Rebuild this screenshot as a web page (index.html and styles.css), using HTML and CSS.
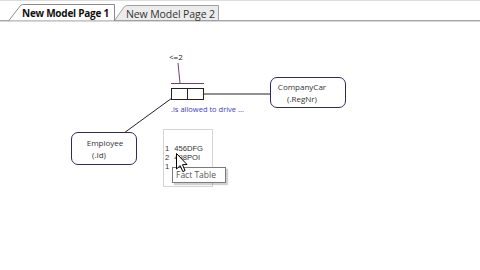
FILE: index.html
```html
<!DOCTYPE html>
<html>
<head>
<meta charset="utf-8">
<link rel="stylesheet" href="styles.css">
</head>
<body>
<div class="app">
  <div class="tabstrip">
    <div class="tab active">
      <svg class="tabbg" width="108" height="17" viewBox="0 0 108 17"><polygon points="0.5,17 12.5,1.5 14.5,0.5 106.5,0.5 106.5,17" fill="#fff" stroke="#8c8c8c"/></svg>
      <span class="tablabel">New Model Page 1</span>
    </div>
    <div class="tab">
      <svg class="tabbg" width="106" height="17" viewBox="0 0 106 17"><polygon points="0.5,16.5 10.5,2.5 12.5,1.5 104.5,1.5 104.5,16.5" fill="#ececec" stroke="#a0a0a0"/></svg>
      <span class="tablabel">New Model Page 2</span>
    </div>
  </div>
  <div class="canvas">
    <svg class="wires" width="480" height="250" viewBox="0 20 480 250">
      <line x1="124" y1="132" x2="172" y2="97" stroke="#222" stroke-width="1"/>
      <line x1="203" y1="93" x2="270" y2="93" stroke="#222" stroke-width="1"/>
      <line x1="178" y1="62" x2="180" y2="82" stroke="#7a3a7a" stroke-width="1"/>
      <line x1="171" y1="82.5" x2="204" y2="82.5" stroke="#7a3a7a" stroke-width="1"/>
      <rect x="171.5" y="87.5" width="32" height="11" fill="#fff" stroke="#222"/>
      <line x1="187.5" y1="88" x2="187.5" y2="98" stroke="#222"/>
      <rect x="163.5" y="128.5" width="49" height="57" fill="#fff" stroke="#d4d4d4"/>
    </svg>
    <div class="constraint">&lt;=2</div>
    <div class="reading">.is allowed to drive ...</div>
    <div class="entity employee"><span>Employee</span><span>(.Id)</span></div>
    <div class="entity car"><span>CompanyCar</span><span>(.RegNr)</span></div>
    <div class="facttable">
      <div class="row"><span class="n">1</span><span>456DFG</span></div>
      <div class="row"><span class="n">2</span><span>498POI</span></div>
      <div class="row"><span class="n">1</span><span></span></div>
    </div>
    <div class="tooltip">Fact Table</div>
    <svg class="cursor" width="12" height="20" viewBox="0 0 12 20"><path d="M0.5,0.5 L0.5,16 L4.2,12.6 L6.8,18.6 L9,17.6 L6.5,11.7 L11,11.5 Z" fill="#fff" stroke="#000" stroke-width="1" stroke-linejoin="miter"/></svg>
  </div>
</div>
</body>
</html>
```
FILE: styles.css
```css
html, body {
  margin: 0;
  padding: 0;
  background: #fff;
  width: 480px;
  height: 270px;
  overflow: hidden;
}
.app {
  display: flex;
  flex-direction: column;
  width: 480px;
  height: 270px;
  font-family: "Open Sans", "DejaVu Sans", sans-serif;
}
.tabstrip {
  display: flex;
  align-items: flex-end;
  padding-left: 8px;
  border-top: 1px solid #dcdcdc;
  border-bottom: 1px solid #a8a8a8;
  box-sizing: border-box;
  height: 21px;
  box-shadow: 0 1px 0 #d8d8d8;
  position: relative;
  z-index: 2;
}
.tab {
  position: relative;
  height: 17px;
  display: flex;
  align-items: center;
  margin-bottom: -1px;
}
.tab.active {
  width: 107px;
  z-index: 2;
}
.tab:not(.active) {
  width: 106px;
  margin-left: -1px;
  z-index: 1;
}
.tabbg {
  position: absolute;
  left: 0;
  top: 0;
}
.tablabel {
  position: relative;
  font-size: 10.5px;
  color: #111;
  white-space: nowrap;
  letter-spacing: -0.1px;
}
.tab.active .tablabel {
  font-size: 10px;
  letter-spacing: -0.25px;
  font-weight: 700;
  padding-left: 14px;
  padding-top: 1px;
}
.tab:not(.active) .tablabel {
  color: #333;
  padding-left: 12px;
  padding-top: 2px;
}
.canvas {
  position: relative;
  flex: 1;
}
.wires {
  position: absolute;
  left: 0;
  top: 0;
}
.constraint {
  position: absolute;
  left: 169px;
  top: 30px;
  font-size: 8px;
  color: #222;
}
.reading {
  position: absolute;
  left: 171px;
  top: 83px;
  font-size: 7.5px;
  color: #3a3ad0;
  white-space: nowrap;
}
.entity {
  position: absolute;
  display: flex;
  flex-direction: column;
  align-items: center;
  justify-content: center;
  border: 1.5px solid #2c2c5c;
  border-radius: 7px;
  background: #fff;
  box-sizing: border-box;
  font-size: 8px;
  line-height: 12px;
  color: #333;
}
.employee {
  left: 71px;
  top: 111px;
  width: 66px;
  height: 33px;
}
.employee span:first-child { margin-left: 2px; }
.car {
  left: 270px;
  top: 56px;
  width: 76px;
  height: 31px;
}
.car span:first-child { margin-left: -12px; }
.car span:last-child { margin-left: -12px; }
.employee span:last-child { margin-left: -10px; }
.facttable {
  position: absolute;
  left: 165px;
  top: 123px;
  display: flex;
  flex-direction: column;
  font-family: "Liberation Sans", sans-serif;
  font-size: 7.6px;
  line-height: 9px;
  color: #333;
}
.row {
  display: flex;
  gap: 5px;
  height: 9px;
}
.tooltip {
  position: absolute;
  left: 172px;
  top: 146px;
  width: 54px;
  height: 16px;
  box-sizing: border-box;
  border: 1px solid #7a7a7a;
  background: #fff;
  font-size: 8.5px;
  line-height: 14px;
  padding-left: 3px;
  color: #555;
  box-shadow: 2px 2px 1px rgba(0,0,0,0.18);
}
.cursor {
  position: absolute;
  left: 176px;
  top: 132px;
}
```
